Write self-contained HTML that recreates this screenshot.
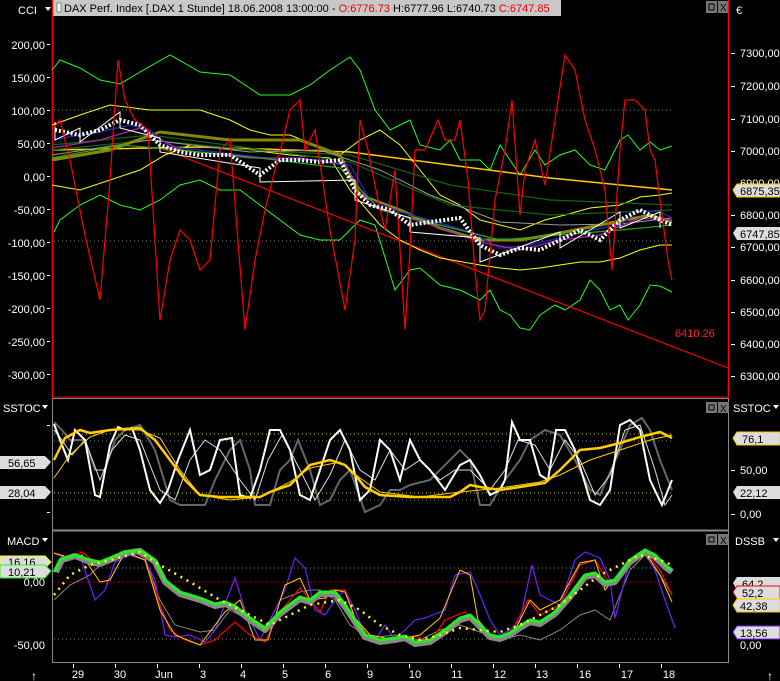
<!DOCTYPE html>
<html><head><meta charset="utf-8"><style>
html,body{margin:0;padding:0;background:#000;width:780px;height:681px;overflow:hidden}
svg{display:block}
text{font-family:"Liberation Sans",sans-serif;font-size:11px;fill:#fff}
</style></head><body>
<svg width="780" height="681" viewBox="0 0 780 681" xmlns="http://www.w3.org/2000/svg">
<rect width="780" height="681" fill="#000"/>
<!-- Title bar -->
<rect x="53" y="0" width="508" height="16" fill="#c8c8c8"/>
<rect x="57" y="3" width="4" height="9" fill="#fff" stroke="#333" stroke-width="0.5"/>
<text x="64" y="12" style="fill:#000;font-size:11px">DAX Perf. Index [.DAX  1 Stunde] 18.06.2008 13:00:00 - <tspan fill="#e00">O:6776.73</tspan> H:6777.96 L:6740.73 <tspan fill="#e00">C:6747.85</tspan></text>
<rect x="706" y="1" width="11" height="12" fill="#777"/><rect x="709" y="4" width="5" height="6" fill="none" stroke="#000"/>
<rect x="718" y="1" width="11" height="12" fill="#777"/><text x="720" y="11" style="fill:#000;font-size:10px">X</text>
<text x="18" y="14">CCI</text><path d="M45 7 l3 4 l3 -4z" fill="#fff"/>
<text x="736" y="14">€</text>

<!-- main panel borders -->
<line x1="52.5" y1="0" x2="52.5" y2="397" stroke="#f00" stroke-width="1.5"/>
<line x1="728.5" y1="0" x2="728.5" y2="397" stroke="#f00" stroke-width="1.5"/>
<line x1="52" y1="397" x2="729" y2="397" stroke="#f00"/>
<line x1="52" y1="398.5" x2="729" y2="398.5" stroke="#888"/>
<line x1="52" y1="530.5" x2="729" y2="530.5" stroke="#888" stroke-width="2"/>
<line x1="52.5" y1="399" x2="52.5" y2="662" stroke="#888"/>
<line x1="728.5" y1="399" x2="728.5" y2="662" stroke="#888"/>
<line x1="52" y1="662.5" x2="729" y2="662.5" stroke="#888"/>

<!-- axis labels main -->
<g text-anchor="end">
<text x="45" y="49">200,00</text><text x="45" y="82">150,00</text><text x="45" y="115">100,00</text><text x="45" y="148">50,00</text><text x="45" y="181">0,00</text><text x="45" y="214">-50,00</text><text x="45" y="247">-100,00</text><text x="45" y="280">-150,00</text><text x="45" y="313">-200,00</text><text x="45" y="346">-250,00</text><text x="45" y="379">-300,00</text>
</g>
<g fill="#fff">
<rect x="47" y="44" width="3" height="1"/><rect x="47" y="77" width="3" height="1"/><rect x="47" y="110" width="3" height="1"/><rect x="47" y="143" width="3" height="1"/><rect x="47" y="176" width="3" height="1"/><rect x="47" y="209" width="3" height="1"/><rect x="47" y="242" width="3" height="1"/><rect x="47" y="275" width="3" height="1"/><rect x="47" y="308" width="3" height="1"/><rect x="47" y="341" width="3" height="1"/><rect x="47" y="374" width="3" height="1"/>
</g>
<g>
<text x="740" y="57">7300,00</text><text x="740" y="90">7200,00</text><text x="740" y="123">7100,00</text><text x="740" y="155">7000,00</text><text x="740" y="187">6900,00</text><text x="740" y="219">6800,00</text><text x="740" y="251">6700,00</text><text x="740" y="284">6600,00</text><text x="740" y="316">6500,00</text><text x="740" y="348">6400,00</text><text x="740" y="380">6300,00</text>
</g>
<g fill="#fff"><rect x="731" y="53" width="4" height="1"/><rect x="731" y="86" width="4" height="1"/><rect x="731" y="119" width="4" height="1"/><rect x="731" y="151" width="4" height="1"/><rect x="731" y="215" width="4" height="1"/><rect x="731" y="247" width="4" height="1"/><rect x="731" y="280" width="4" height="1"/><rect x="731" y="312" width="4" height="1"/><rect x="731" y="344" width="4" height="1"/><rect x="731" y="376" width="4" height="1"/></g>

<!-- dotted refs -->
<line x1="54" y1="110" x2="672" y2="110" stroke="#888" stroke-dasharray="1 3"/>
<line x1="54" y1="241" x2="672" y2="241" stroke="#888" stroke-dasharray="1 3"/>

<!-- green bands -->
<polyline fill="none" stroke="#2f2" points="52,70 60,60 80,68 100,80 120,84 140,72 170,55 200,72 230,75 260,95 290,95 310,85 330,70 350,57 360,70 375,110 390,130 410,120 420,145 440,150 450,140 460,160 480,160 490,170 500,145 520,175 535,150 545,165 560,155 575,150 590,165 605,170 620,140 628,135 640,150 650,142 660,150 672,146"/>
<polyline fill="none" stroke="#2f2" points="54,232 60,220 80,205 100,195 120,205 140,210 160,200 180,185 200,180 220,190 240,190 260,205 280,220 300,235 320,240 340,240 360,220 375,225 395,290 410,270 420,268 440,285 460,290 480,300 490,290 500,310 510,315 520,328 530,330 540,315 555,305 565,310 580,300 590,280 600,290 610,310 620,305 628,320 640,305 650,285 660,286 672,292"/>
<!-- trendline -->
<line x1="160" y1="148" x2="728" y2="368" stroke="#f00" stroke-width="1.2"/>
<text x="675" y="337" style="fill:#f22;font-size:11px">6410.26</text>
<!-- yellow lines -->
<polyline fill="none" stroke="#fc0" stroke-width="1.5" points="52,150 200,147 350,152 450,165 550,178 672,190"/>
<polyline fill="none" stroke="#ff0" points="52,125 80,115 110,105 150,110 200,110 230,120 250,130 270,135 290,135 340,155 360,140 380,130 400,145 420,170 440,195 460,205 480,220 500,225 520,230 545,220 565,215 590,208 620,205 640,197 660,195 672,193"/>
<polyline fill="none" stroke="#ff0" points="52,185 80,190 110,180 140,170 165,155 190,145 200,145 220,148 250,150 290,155 330,158 350,190 380,225 400,240 420,250 440,258 480,265 500,268 520,270 540,268 560,265 580,262 600,262 620,258 640,250 660,245 672,245"/>
<!-- MA cluster -->
<polyline fill="none" stroke="#161" stroke-width="1.2" points="52,150 150,140 250,150 350,155 450,185 550,200 672,205"/>
<polyline fill="none" stroke="#161" stroke-width="1.2" points="52,145 150,135 250,148 350,162 450,205 550,215 672,210"/>
<polyline fill="none" stroke="#999" points="52,155 150,140 250,152 320,150 380,170 430,195 500,222 560,225 620,224 672,218"/>
<polyline fill="none" stroke="#880" stroke-width="3" points="52,160 110,150 160,132 230,140 300,140 340,155 360,195 400,210 440,228 480,240 520,240 550,235 600,225 650,215 672,222"/>
<polyline fill="none" stroke="#22a" stroke-width="1.5" points="52,140 80,135 100,132 130,125 150,130 170,147 200,150 240,155 280,160 320,160 350,165 370,200 400,212 430,220 470,232 500,248 530,245 560,238 590,230 620,225 640,210 660,212 672,218"/>
<polyline fill="none" stroke="#a2a" stroke-width="1.3" points="52,148 100,140 140,128 180,150 250,158 300,158 345,165 370,205 400,215 440,228 480,242 520,250 560,240 600,235 640,218 672,220"/>
<polyline fill="none" stroke="#2a2" stroke-width="1.2" points="52,158 120,145 180,150 260,158 340,168 380,210 440,225 500,240 560,235 620,230 672,225"/>
<!-- candles -->
<polyline fill="none" stroke="#fff" stroke-width="4" stroke-dasharray="2 2" points="55,130 80,135 100,130 120,120 140,125 160,145 180,152 200,155 230,155 260,175 280,160 300,160 320,162 340,160 355,190 370,205 390,210 410,225 430,222 460,218 480,245 500,255 520,248 540,250 560,240 580,230 600,240 620,220 640,210 660,220 672,225"/>
<polyline fill="none" stroke="#fff" stroke-width="1" points="55,122 55,140 80,128 80,142 120,112 120,128 160,138 160,152 260,168 260,182 355,180 355,200 410,218 410,232 480,238 480,262 560,232 560,248 620,212 620,228 660,212 660,228"/>
<!-- CCI red -->
<polyline fill="none" stroke="#f00" stroke-width="1.2" points="52,130 60,120 70,160 85,235 100,300 110,180 118,60 125,100 135,120 148,130 160,320 170,260 180,230 190,240 200,270 210,260 220,150 230,140 245,330 255,260 265,210 275,170 283,140 290,110 300,100 305,150 315,130 330,230 345,310 355,240 360,120 368,150 378,200 385,230 395,170 405,330 410,250 415,150 425,150 438,120 445,140 455,140 460,120 468,180 475,270 480,320 485,310 495,200 505,150 512,100 520,215 525,170 535,140 545,185 555,120 565,55 575,70 585,120 595,150 605,190 612,270 620,150 625,100 635,100 645,110 650,150 655,160 660,200 668,260 672,280"/>
<!-- right labels main -->
<path d="M733 190 l4 -6 h43 v13 h-43z" fill="#ddd" stroke="#fc0"/>
<text x="740" y="195" style="fill:#000">6875,35</text>
<path d="M733 233 l4 -6 h43 v13 h-43z" fill="#ddd"/>
<text x="740" y="238" style="fill:#000">6747,85</text>

<!-- SSTOC panel -->
<text x="3" y="412">SSTOC</text><path d="M42 405 l3 4 l3 -4z" fill="#fff"/>
<text x="733" y="412">SSTOC</text><path d="M773 405 l3 4 l3 -4z" fill="#fff"/>
<rect x="706" y="402" width="11" height="11" fill="#777"/><rect x="709" y="405" width="5" height="5" fill="none" stroke="#000"/>
<rect x="718" y="402" width="11" height="11" fill="#777"/><text x="720" y="412" style="fill:#000;font-size:10px">X</text>
<line x1="54" y1="434" x2="672" y2="434" stroke="#cc0" stroke-dasharray="1 3"/>
<line x1="54" y1="441" x2="672" y2="441" stroke="#888" stroke-dasharray="1 3"/>
<line x1="54" y1="493" x2="672" y2="493" stroke="#cc0" stroke-dasharray="1 3"/>
<line x1="54" y1="500" x2="672" y2="500" stroke="#888" stroke-dasharray="1 3"/>
<text x="740" y="474">50,00</text><text x="740" y="518">0,00</text>
<g fill="#fff"><rect x="731" y="470" width="4" height="1"/><rect x="731" y="514" width="4" height="1"/><rect x="47" y="425" width="3" height="1"/><rect x="47" y="512" width="3" height="1"/></g>
<polyline fill="none" stroke="#666" stroke-width="2" points="54,422 62,430 70,440 85,440 95,470 105,470 115,440 125,430 140,425 155,450 170,500 180,505 205,505 215,480 230,450 240,440 250,470 255,505 270,505 280,470 290,460 298,440 310,470 320,505 330,500 340,480 350,470 365,512 380,505 390,490 400,490 410,485 430,480 440,470 460,450 470,460 480,505 490,505 505,480 520,460 530,440 545,430 560,435 575,460 590,490 600,495 620,450 630,425 642,418 650,430 660,460 672,490"/>
<polyline fill="none" stroke="#ddd" stroke-width="1" points="54,430 62,440 72,455 85,440 100,480 112,450 125,435 140,440 160,490 175,500 190,460 205,440 220,450 240,480 255,500 268,460 282,435 300,470 315,500 330,475 345,440 360,470 375,480 390,450 405,470 420,460 440,480 455,470 470,470 490,490 505,470 518,440 535,445 550,470 565,440 580,460 595,495 610,475 625,430 640,425 655,470 665,505 672,495"/>
<polyline fill="none" stroke="#fff" stroke-width="2" points="54,424 60,440 68,460 75,430 85,440 95,495 100,497 110,445 118,427 125,430 132,428 140,450 150,490 160,503 168,490 178,460 190,430 200,475 210,470 220,440 232,438 240,495 250,498 260,470 270,430 280,430 290,450 300,495 310,500 320,470 330,440 340,430 350,450 360,500 370,490 380,440 390,450 400,480 410,440 420,460 430,470 445,490 460,465 470,460 480,475 490,495 500,490 505,480 512,422 520,440 530,440 540,475 548,480 556,430 565,430 575,450 590,500 600,505 610,490 620,425 630,420 640,430 650,480 662,505 672,480"/>
<polyline fill="none" stroke="#fc0" stroke-width="1" points="54,478 70,455 90,437 110,430 140,430 160,438 180,470 200,495 230,500 260,497 290,482 310,468 340,462 360,478 380,492 420,497 460,492 500,488 540,482 560,475 590,460 620,450 650,440 672,435"/>
<polyline fill="none" stroke="#fc0" stroke-width="2.5" points="54,460 65,438 80,430 90,433 110,430 140,428 155,440 170,460 185,480 200,495 220,497 260,497 270,492 290,485 310,465 330,460 345,465 355,475 365,487 380,495 410,497 450,497 460,492 470,485 480,487 500,490 520,487 545,483 560,470 580,450 600,448 620,443 640,437 660,432 672,438"/>
<path d="M0 456 h45 l6 6 l-6 7 h-45z" fill="#ddd"/><text x="8" y="467" style="fill:#000">56,65</text>
<path d="M0 486 h45 l6 6 l-6 7 h-45z" fill="#ddd"/><text x="8" y="497" style="fill:#000">28,04</text>
<path d="M733 438 l4 -6 h43 v13 h-43z" fill="#ddd" stroke="#fc0"/><text x="742" y="443" style="fill:#000">76,1</text>
<path d="M733 492 l4 -6 h43 v13 h-43z" fill="#ddd"/><text x="740" y="497" style="fill:#000">22,12</text>

<!-- MACD panel -->
<text x="7" y="545">MACD</text><path d="M42 538 l3 4 l3 -4z" fill="#fff"/>
<text x="735" y="545">DSSB</text><path d="M773 538 l3 4 l3 -4z" fill="#fff"/>
<rect x="706" y="534" width="11" height="11" fill="#777"/><rect x="709" y="537" width="5" height="5" fill="none" stroke="#000"/>
<rect x="718" y="534" width="11" height="11" fill="#777"/><text x="720" y="544" style="fill:#000;font-size:10px">X</text>
<line x1="54" y1="568" x2="672" y2="568" stroke="#888" stroke-dasharray="1 3"/>
<line x1="54" y1="582" x2="672" y2="582" stroke="#c00" stroke-dasharray="1 3"/>
<line x1="54" y1="639" x2="672" y2="639" stroke="#888" stroke-dasharray="1 3"/>
<g text-anchor="end"><text x="45" y="586">0,00</text><text x="45" y="649">-50,00</text></g>
<text x="740" y="649">0,00</text>
<polyline fill="none" stroke="#888" points="54,600 70,585 90,575 100,565 115,555 130,550 145,558 160,600 175,625 200,632 215,630 230,610 245,618 265,630 280,600 300,592 310,590 320,590 335,600 350,625 370,638 395,635 420,640 440,630 460,625 480,632 500,640 520,635 540,640 560,630 580,615 595,610 610,620 630,570 645,555 660,575 672,595"/>
<polyline fill="none" stroke="#7020ff" stroke-width="1.2" points="54,553 70,560 80,556 95,600 105,590 115,562 130,555 145,560 155,580 165,635 175,637 190,635 205,642 215,630 235,578 245,610 260,640 270,620 285,590 295,558 305,568 315,610 325,615 335,600 345,590 355,610 365,635 375,640 385,625 395,640 405,630 415,620 425,618 445,610 455,575 470,572 478,590 490,620 500,635 510,630 520,620 532,565 540,595 560,605 575,560 585,552 600,558 610,580 615,618 630,560 645,552 655,570 665,600 675,628"/>
<polyline fill="none" stroke="#f00" stroke-width="1.2" points="54,553 70,558 82,552 95,562 110,560 125,552 145,560 160,605 170,630 185,640 200,645 215,640 235,622 250,635 265,642 280,612 300,588 310,600 320,612 330,590 345,590 355,618 370,638 395,640 415,636 430,642 445,620 465,612 478,625 495,640 510,635 528,600 540,615 560,605 580,565 595,560 610,585 625,570 645,552 660,570 672,595"/>
<polyline fill="none" stroke="#fc0" stroke-width="1" points="54,553 70,558 82,555 100,582 110,580 125,552 145,560 160,610 175,635 200,645 225,612 240,600 255,640 268,640 285,585 300,578 310,600 325,598 335,590 345,592 355,618 370,635 395,640 420,635 440,618 460,570 470,575 478,620 495,640 515,630 530,600 540,610 560,600 580,563 595,560 605,590 630,560 645,552 660,575 672,602"/>
<polyline fill="none" stroke="#888" stroke-width="6" stroke-linejoin="round" points="56,572 62,560 75,556 90,562 100,564 110,560 125,553 140,551 155,562 165,582 180,594 200,600 215,606 225,604 235,608 250,620 265,630 280,614 300,599 310,602 320,594 335,594 345,607 355,622 365,637 380,642 395,640 405,638 415,644 430,642 445,632 460,620 470,617 480,627 490,637 500,639 510,635 520,628 530,622 540,624 555,614 570,597 585,577 595,575 605,584 615,582 630,562 645,552 655,557 665,567 672,572"/>
<polyline fill="none" stroke="#2e2" stroke-width="3" stroke-linejoin="round" points="54,572 60,560 75,555 90,560 100,562 110,558 125,552 140,550 155,560 165,580 180,592 200,598 215,604 225,602 235,606 250,618 265,628 280,612 300,597 310,600 320,592 335,592 345,605 355,620 365,635 380,640 395,638 405,636 415,642 430,640 445,630 460,618 470,615 480,625 490,635 500,637 510,633 520,626 530,620 540,622 555,612 570,595 585,575 595,573 605,582 615,580 630,560 645,550 655,555 665,565 672,570"/>
<polyline fill="none" stroke="#ff0" stroke-width="2.5" stroke-dasharray="2 5" points="54,595 70,575 90,565 110,560 140,552 160,565 190,582 220,600 250,615 270,625 290,615 310,605 340,600 360,610 380,625 400,635 420,640 440,635 460,628 480,630 500,632 520,625 540,615 560,605 580,590 600,575 620,565 640,555 660,560 672,565"/>
<path d="M0 556 h45 l6 6 l-6 6 h-45z" fill="#ddd" stroke="#ff0"/><text x="8" y="566" style="fill:#000">16,16</text>
<path d="M0 565 h45 l6 6 l-6 7 h-45z" fill="#ddd" stroke="#2e2"/><text x="8" y="576" style="fill:#000">10,21</text>
<path d="M733 583 l4 -6 h43 v13 h-43z" fill="#ddd"/><text x="742" y="588" style="fill:#000">64,2</text>
<path d="M733 592 l4 -6 h43 v13 h-43z" fill="#ddd" stroke="#f00"/><text x="742" y="597" style="fill:#000">52,2</text>
<path d="M733 605 l4 -6 h43 v13 h-43z" fill="#ddd" stroke="#fc0"/><text x="740" y="610" style="fill:#000">42,38</text>
<path d="M733 632 l4 -6 h43 v13 h-43z" fill="#ddd" stroke="#7020ff"/><text x="740" y="637" style="fill:#000">13,56</text>

<!-- x axis -->
<g fill="#fff">
<rect x="73" y="664" width="1" height="4"/><rect x="115" y="664" width="1" height="4"/><rect x="157" y="664" width="1" height="4"/><rect x="199" y="664" width="1" height="4"/><rect x="241" y="664" width="1" height="4"/><rect x="283" y="664" width="1" height="4"/><rect x="325" y="664" width="1" height="4"/><rect x="367" y="664" width="1" height="4"/><rect x="409" y="664" width="1" height="4"/><rect x="451" y="664" width="1" height="4"/><rect x="493" y="664" width="1" height="4"/><rect x="535" y="664" width="1" height="4"/><rect x="577" y="664" width="1" height="4"/><rect x="619" y="664" width="1" height="4"/><rect x="661" y="664" width="1" height="4"/>
</g>
<g text-anchor="middle">
<text x="78" y="678">29</text><text x="120" y="678">30</text><text x="164" y="678">Jun</text><text x="203" y="678">3</text><text x="243" y="678">4</text><text x="285" y="678">5</text><text x="328" y="678">6</text><text x="370" y="678">9</text><text x="415" y="678">10</text><text x="457" y="678">11</text><text x="500" y="678">12</text><text x="542" y="678">13</text><text x="585" y="678">16</text><text x="627" y="678">17</text><text x="669" y="678">18</text>
</g>
<text x="31" y="680" style="font-size:12px">↑</text>
<text x="767" y="680" style="font-size:12px">↑</text>
</svg>
</body></html>
